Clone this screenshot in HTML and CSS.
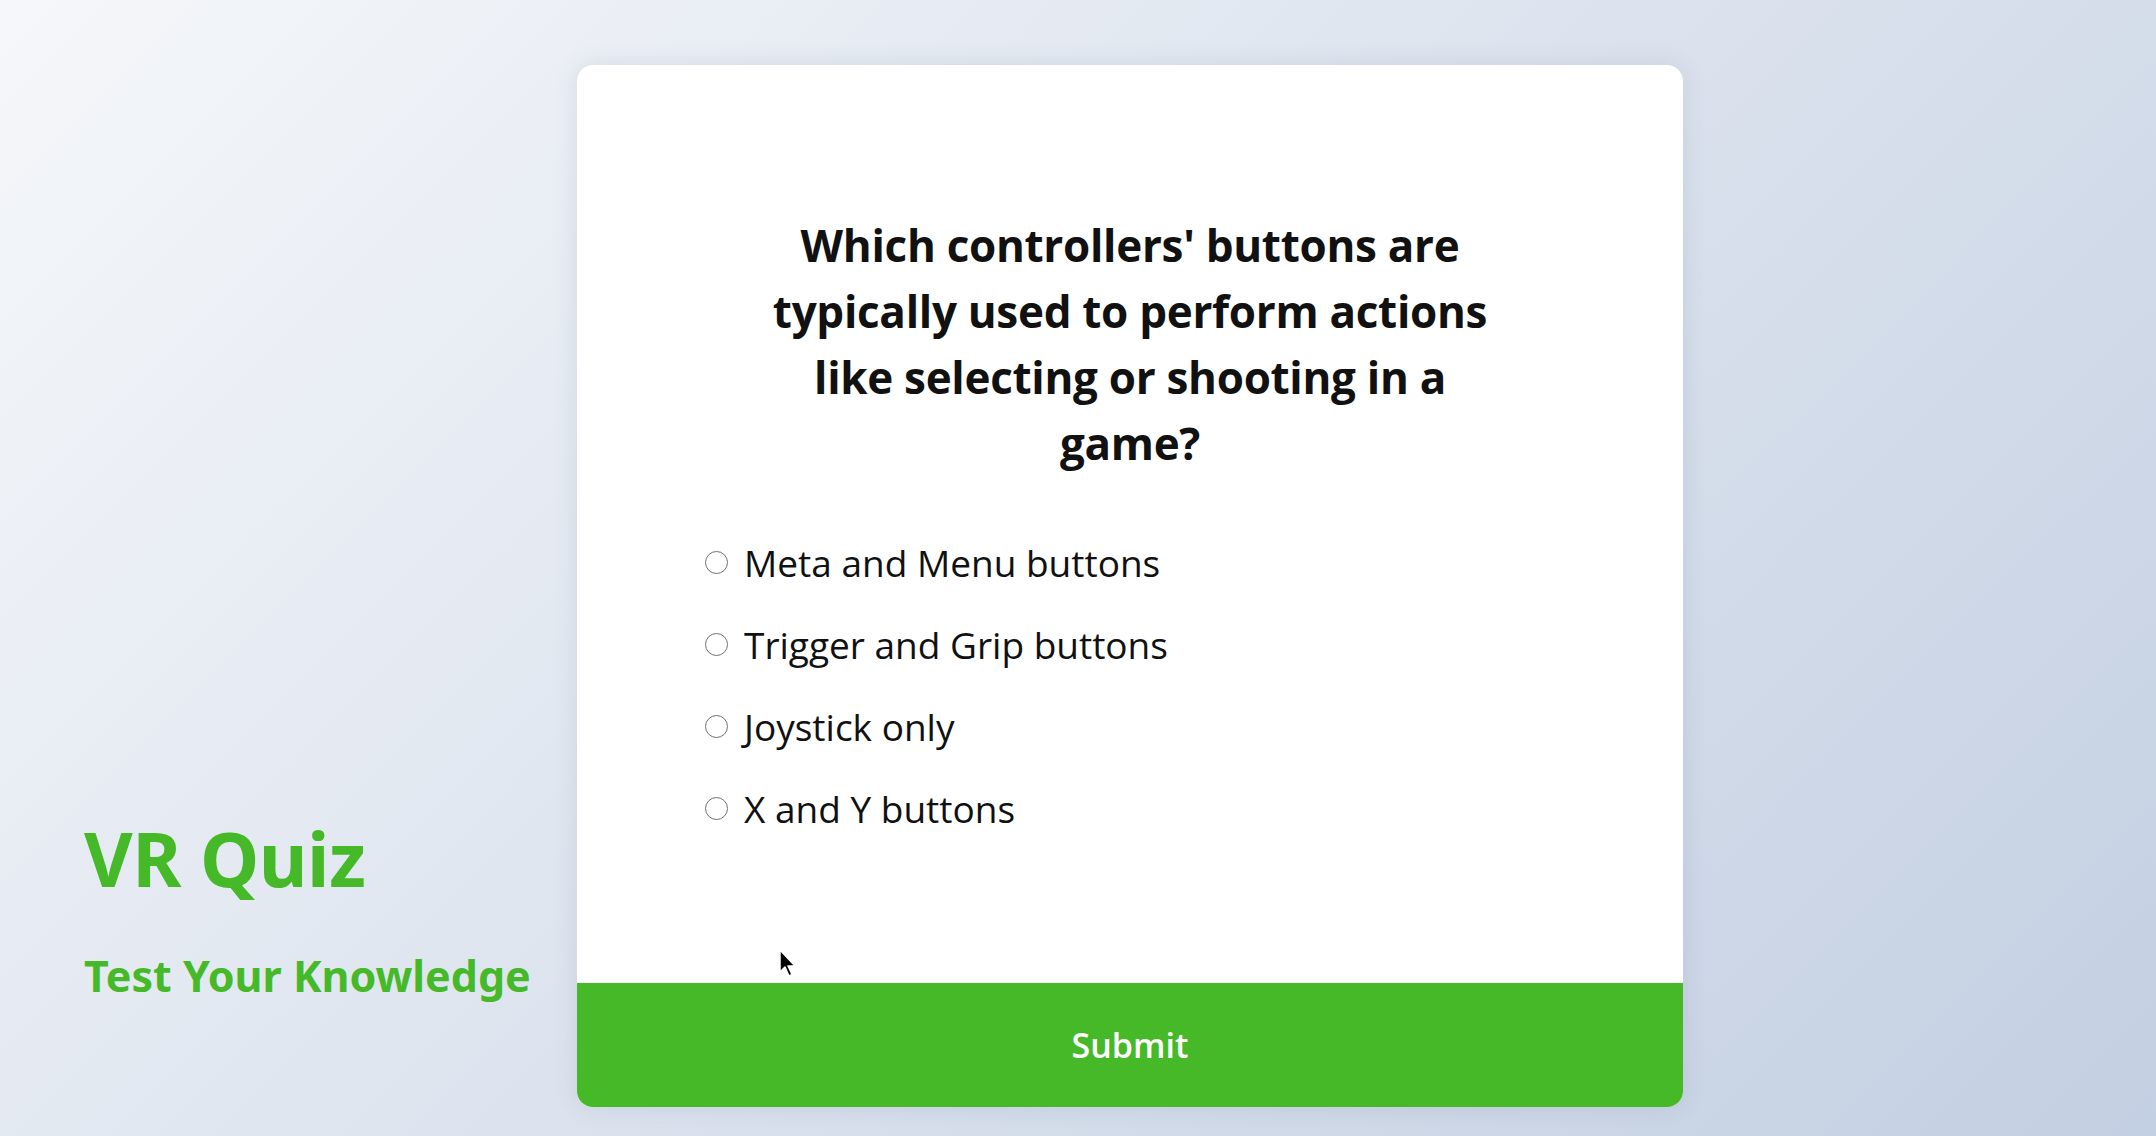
FILE: index.html
```html
<!DOCTYPE html>
<html lang="en">
<head>
<meta charset="utf-8">
<title>VR Quiz</title>
<link rel="stylesheet" href="styles.css">
</head>
<body>
<div class="page">
  <aside class="intro">
    <h1 class="intro-title">VR Quiz</h1>
    <p class="intro-sub">Test Your Knowledge</p>
  </aside>
  <main class="card">
    <div class="quiz">
      <h2 class="question">Which controllers' buttons are typically used to perform actions like selecting or shooting in a game?</h2>
      <ul class="options">
        <li class="option"><input type="radio" name="a" class="radio" id="o1"><label for="o1">Meta and Menu buttons</label></li>
        <li class="option"><input type="radio" name="a" class="radio" id="o2"><label for="o2">Trigger and Grip buttons</label></li>
        <li class="option"><input type="radio" name="a" class="radio" id="o3"><label for="o3">Joystick only</label></li>
        <li class="option"><input type="radio" name="a" class="radio" id="o4"><label for="o4">X and Y buttons</label></li>
      </ul>
    </div>
    <button class="submit">Submit</button>
  </main>
  <svg class="cursor" width="20" height="30" viewBox="0 0 20 30"><path d="M2 2 L2 24 L7 19 L11 28 L14 26.5 L10 18 L17 18 Z" fill="#000" stroke="#fff" stroke-width="1.5" stroke-linejoin="round"/></svg>
</div>
</body>
</html>
```
FILE: styles.css
```css
html, body {
  margin: 0;
  padding: 0;
}
body {
  width: 2156px;
  height: 1136px;
  overflow: hidden;
  background: linear-gradient(135deg, #f5f7fa 0%, #c3cfe2 100%);
  font-family: "Open Sans", "Noto Sans", sans-serif;
}
.page {
  position: relative;
  display: flex;
  align-items: flex-start;
  height: 1136px;
  box-sizing: border-box;
  padding-top: 65px;
}
.intro {
  width: 577px;
  box-sizing: border-box;
  padding-left: 84px;
  align-self: flex-end;
  padding-bottom: 139px;
  color: #46b928;
  font-family: "Noto Sans", "Open Sans", sans-serif;
}
.intro-title {
  margin: 0;
  font-size: 75px;
  font-weight: 700;
  line-height: 1;
  letter-spacing: -0.5px;
}
.intro-sub {
  margin: 58px 0 0;
  font-size: 43px;
  font-weight: 700;
  line-height: 1;
}
.card {
  width: 1106px;
  height: 1042px;
  background: #fff;
  border-radius: 16px;
  overflow: hidden;
  display: flex;
  flex-direction: column;
  box-shadow: 0 0 24px rgba(60, 80, 110, 0.12);
}
.quiz {
  flex: 1;
  padding-top: 147px;
  display: flex;
  flex-direction: column;
  align-items: center;
}
.question {
  margin: 0;
  width: 750px;
  text-align: center;
  font-size: 44px;
  line-height: 66px;
  font-weight: 700;
  color: #111;
  letter-spacing: -0.3px;
}
.options {
  list-style: none;
  margin: 60px 0 0;
  padding: 0 0 0 128px;
  align-self: stretch;
  display: flex;
  flex-direction: column;
  gap: 30px;
}
.option {
  display: flex;
  align-items: center;
  gap: 16px;
  height: 52px;
  font-size: 37px;
  color: #111;
}
.radio {
  appearance: none;
  -webkit-appearance: none;
  margin: 0;
  width: 23px;
  height: 23px;
  border: 1.5px solid #707070;
  border-radius: 50%;
  box-sizing: border-box;
  background: #fff;
}
.submit {
  height: 124px;
  border: 0;
  background: #46b928;
  color: #fff;
  font-family: "Open Sans", sans-serif;
  font-size: 34px;
  font-weight: 600;
  cursor: pointer;
}
.cursor {
  position: absolute;
  left: 778px;
  top: 948px;
}
```
